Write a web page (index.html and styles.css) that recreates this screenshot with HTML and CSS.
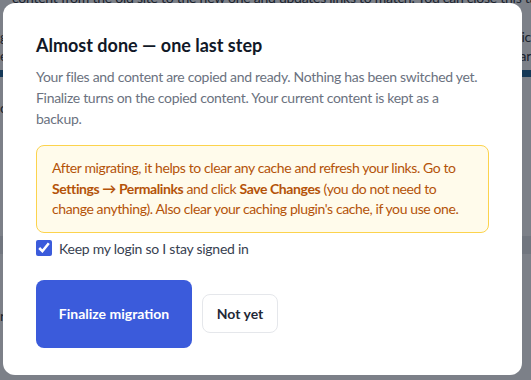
FILE: index.html
```html
<!DOCTYPE html>
<html lang="en">
<head>
    <meta charset="UTF-8">
    <meta name="viewport" content="width=device-width, initial-scale=1.0">
    <title>Migration - Finalize</title>
    <link rel="stylesheet" href="styles.css">
</head>
<body>
    <!-- Page behind the dialog -->
    <div class="page">
        <p class="page-line page-top">content from the old site to the new one and updates links to match. You can close this tab anytime.</p>
        <div class="page-row">
            <span>g</span><span>ic</span>
        </div>
        <div class="page-row">
            <span>e</span><span>ar</span>
        </div>
        <div class="page-bar"></div>
        <div class="page-row">
            <span>c</span><span></span>
        </div>
        <div class="page-band"></div>
        <p class="page-line page-bottom">rent. Your current content is kept as a backup. Just in case.</p>
    </div>

    <!-- Finalize dialog -->
    <div class="modal-overlay">
        <div class="modal-content">
            <h2 class="modal-title">Almost done — one last step</h2>
            <p class="modal-text">Your files and content are copied and ready. Nothing has been switched yet. Finalize turns on the copied content. Your current content is kept as a backup.</p>

            <div class="notice">
                After migrating, it helps to clear any cache and refresh your links. Go to
                <strong>Settings → Permalinks</strong> and click <strong>Save Changes</strong>
                (you do not need to change anything). Also clear your caching plugin's cache, if you use one.
            </div>

            <div class="checkbox-item">
                <input type="checkbox" id="keep-login" checked>
                <label for="keep-login">Keep my login so I stay signed in</label>
            </div>

            <div class="button-row">
                <button class="primary-button">Finalize migration</button>
                <button class="secondary-button">Not yet</button>
            </div>
        </div>
    </div>
</body>
</html>
```

FILE: styles.css
```css
/* General Styles */
body {
    font-family: 'Lato', 'Liberation Sans', sans-serif;
    margin: 0;
    padding: 0;
    background-color: #fff;
    color: #1f2937;
    height: 380px;
    overflow: hidden;
    letter-spacing: -0.25px;
}

/* Page behind */
.page {
    height: 380px;
    overflow: hidden;
    font-size: 14px;
    color: #2b2f36;
}

.page-line {
    margin: 0;
    white-space: nowrap;
}

.page-top {
    margin-top: -11px;
    padding-left: 12px;
}

.page-row {
    display: flex;
    justify-content: space-between;
    margin-top: 22px;
}

.page-row + .page-row {
    margin-top: 2px;
}

.page-bar {
    height: 7px;
    margin-top: 6px;
    background-color: #1b5f93;
}

.page-band {
    height: 18px;
    margin-top: 120px;
    background-color: #e6e8ec;
}

.page-bottom {
    margin-top: 53px;
}

/* Modal Styles */
.modal-overlay {
    position: fixed;
    top: 0;
    left: 0;
    width: 100%;
    height: 100%;
    background-color: rgba(17, 24, 39, 0.55);
    padding: 3px 0 0 3px;
    box-sizing: border-box;
}

.modal-content {
    background-color: white;
    width: 519px;
    height: 372px;
    border-radius: 12px;
    padding: 30px 33px 0 33px;
    box-sizing: border-box;
}

.modal-title {
    margin: 0;
    font-size: 18px;
    line-height: 25px;
    font-weight: 700;
    color: #111827;
    letter-spacing: 0;
}

.modal-text {
    max-width: 446px;
    margin: 8px 0 16px 0;
    font-size: 14px;
    line-height: 21px;
    color: #6b7280;
    letter-spacing: -0.3px;
}

/* Notice */
.notice {
    background-color: #fffbeb;
    border: 1px solid #fcd34d;
    border-radius: 8px;
    padding: 12px 16px 12px 15px;
    font-size: 14px;
    line-height: 20.5px;
    color: #b45309;
    letter-spacing: -0.4px;
}

.notice strong {
    font-weight: 700;
}

.checkbox-item {
    display: flex;
    align-items: center;
    margin-top: 7px;
}

.checkbox-item input {
    width: 16px;
    height: 16px;
    margin: 0 7px 0 0;
    accent-color: #3b5bdb;
}

.checkbox-item label {
    font-size: 14px;
    color: #374151;
}

/* Buttons */
.button-row {
    display: flex;
    align-items: center;
    gap: 10px;
    margin-top: 23px;
}

.primary-button {
    background-color: #3b5bdb;
    color: white;
    border: none;
    width: 156px;
    height: 68px;
    border-radius: 8px;
    font-family: inherit;
    font-size: 14px;
    font-weight: 700;
    letter-spacing: 0;
    cursor: pointer;
}

.secondary-button {
    background-color: white;
    color: #1f2937;
    border: 1px solid #e5e7eb;
    width: 76px;
    height: 39px;
    border-radius: 8px;
    font-family: inherit;
    font-size: 14px;
    font-weight: 700;
    letter-spacing: 0;
    cursor: pointer;
}
```
